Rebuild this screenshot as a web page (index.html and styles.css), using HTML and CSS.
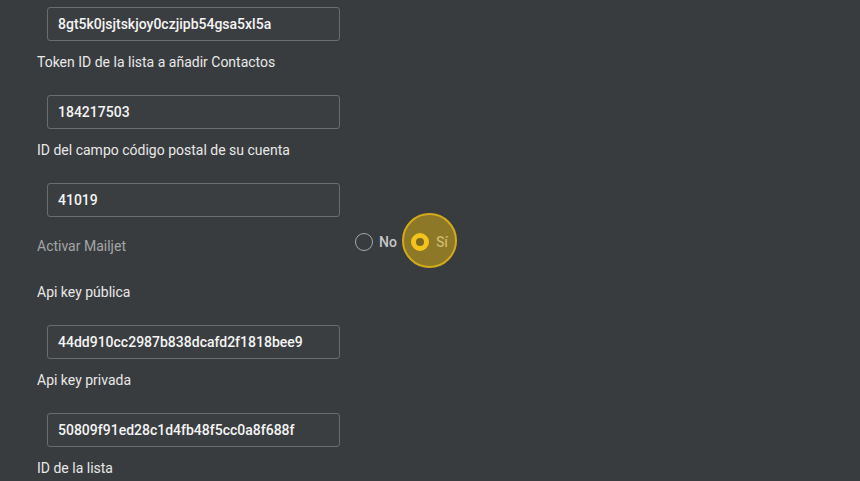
FILE: index.html
```html
<!DOCTYPE html>
<html lang="es">
<head>
<meta charset="utf-8">
<link rel="stylesheet" href="styles.css">
</head>
<body>
<div class="form">
  <div class="field"><div class="input">8gt5k0jsjtskjoy0czjipb54gsa5xl5a</div></div>
  <div class="label">Token ID de la lista a añadir Contactos</div>
  <div class="field"><div class="input">184217503</div></div>
  <div class="label">ID del campo código postal de su cuenta</div>
  <div class="field"><div class="input">41019</div></div>
  <div class="radio-row">
    <div class="label muted">Activar Mailjet</div>
    <div class="options">
      <div class="opt"><span class="circle"></span><span class="opt-text">No</span></div>
      <div class="opt selected"><span class="halo"></span><span class="circle on"></span><span class="opt-text">Sí</span></div>
    </div>
  </div>
  <div class="label">Api key pública</div>
  <div class="field"><div class="input">44dd910cc2987b838dcafd2f1818bee9</div></div>
  <div class="label">Api key privada</div>
  <div class="field"><div class="input">50809f91ed28c1d4fb48f5cc0a8f688f</div></div>
  <div class="label">ID de la lista</div>
</div>
</body>
</html>
```
FILE: styles.css
```css
html, body {
  margin: 0;
  padding: 0;
  background: #393c3e;
  font-family: Roboto, "Liberation Sans", sans-serif;
  overflow: hidden;
}
.form {
  padding: 7px 0 0 37px;
  display: flex;
  flex-direction: column;
}
.field {
  padding-left: 10px;
}
.input {
  box-sizing: border-box;
  width: 293px;
  height: 34px;
  border: 1px solid #6a6d6f;
  border-radius: 3px;
  background: #3b3e40;
  color: #f4f4f4;
  font-size: 14px;
  font-weight: 500;
  line-height: 32px;
  padding-left: 10px;
}
.label {
  color: #e8e8e8;
  font-size: 14px;
  line-height: 20px;
  height: 54px;
  padding-top: 11px;
  box-sizing: border-box;
}
.radio-row {
  display: flex;
  align-items: flex-start;
  height: 54px;
}
.radio-row .label {
  width: 318px;
  height: auto;
  padding-top: 19px;
}
.muted { color: #a3a6a8; }
.options {
  display: flex;
  align-items: center;
  margin-top: 16px;
}
.opt {
  position: relative;
  display: flex;
  align-items: center;
  height: 18px;
}
.circle {
  box-sizing: border-box;
  width: 18px;
  height: 18px;
  border: 1.5px solid #a5a7a9;
  border-radius: 50%;
  position: relative;
  z-index: 1;
}
.circle.on {
  border: 5px solid #f2c31b;
  background: #7a6820;
}
.opt-text {
  margin-left: 6px;
  font-size: 14px;
  font-weight: 500;
  color: #c4c6c8;
  position: relative;
  z-index: 1;
}
.opt.selected { margin-left: 14px; }
.opt.selected .opt-text { color: #cdb76a; margin-left: 7px; }
.halo {
  position: absolute;
  left: -9px;
  top: -20px;
  width: 55px;
  height: 55px;
  box-sizing: border-box;
  border-radius: 50%;
  background: #8c7827;
  border: 2px solid #d2aa1c;
}
```
